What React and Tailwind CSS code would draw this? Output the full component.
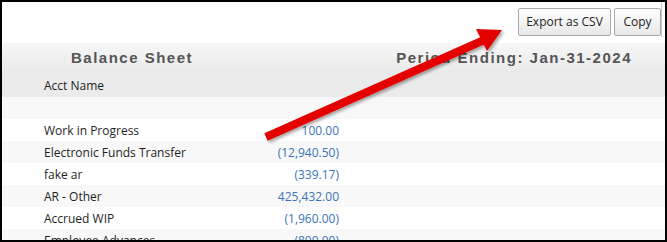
import React from "react";

const rows = [
  { name: "", amount: "" },
  { name: "Work in Progress", amount: "100.00" },
  { name: "Electronic Funds Transfer", amount: "(12,940.50)" },
  { name: "fake ar", amount: "(339.17)" },
  { name: "AR - Other", amount: "425,432.00" },
  { name: "Accrued WIP", amount: "(1,960.00)" },
  { name: "Employee Advances", amount: "(800.00)" },
];

function Arrow() {
  return (
    <svg
      className="absolute -left-[2px] -top-[2px] pointer-events-none"
      width="667"
      height="242"
      viewBox="0 0 667 242"
    >
      <defs>
        <filter id="sh" x="-20%" y="-20%" width="140%" height="140%">
          <feDropShadow dx="2" dy="2" stdDeviation="1.5" floodColor="#000" floodOpacity="0.35" />
        </filter>
      </defs>
      <g filter="url(#sh)">
        <line x1="266" y1="137" x2="484" y2="40" stroke="#e50000" strokeWidth="8" />
        <polygon points="476,29 502,30 487,51" fill="#e50000" />
      </g>
    </svg>
  );
}

export default function App() {
  return (
    <div className="relative w-[667px] h-[242px] border-2 border-black bg-white overflow-hidden font-['Open_Sans',sans-serif] text-[#1e1e1e]">
      <div className="h-[35px] mr-[3px] border-r border-[#c8c8c8] flex justify-end items-start pt-[6px] gap-[3px]">
        <button className="w-[93px] h-[28px] border border-[#aaa] rounded-[2px] bg-gradient-to-b from-white to-[#e8e8e8] text-[12px] text-[#222]">
          Export as CSV
        </button>
        <button className="w-[47px] h-[28px] border border-[#aaa] rounded-[2px] bg-gradient-to-b from-white to-[#e8e8e8] text-[12px] text-[#222]">
          Copy
        </button>
      </div>
      <div className="h-[6px]" />
      <div className="h-[31px] bg-gradient-to-b from-[#f7f7f7] to-[#e9e9e9] flex items-center justify-between pl-[69px] pr-[33px] font-['Liberation_Sans',Arial,sans-serif] font-bold text-[15px] tracking-[1.5px] text-[#555]">
        <span>Balance Sheet</span>
        <span>Period Ending: Jan-31-2024</span>
      </div>
      <div className="h-[23px] bg-[#ebebeb] flex items-center pl-[42px] pt-[1px] text-[12px]">
        Acct Name
      </div>
      {rows.map((r, i) => (
        <div
          key={i}
          className={`h-[22px] grid grid-cols-[240px_97px_1fr] items-center pt-[2px] text-[12px] ${
            i % 2 === 0 ? "bg-[#f8f8f8]" : "bg-white"
          }`}
        >
          <span className="pl-[42px] whitespace-nowrap">{r.name}</span>
          <span className="text-right text-[#3a74b6]">{r.amount}</span>
          <span />
        </div>
      ))}
      <Arrow />
    </div>
  );
}
